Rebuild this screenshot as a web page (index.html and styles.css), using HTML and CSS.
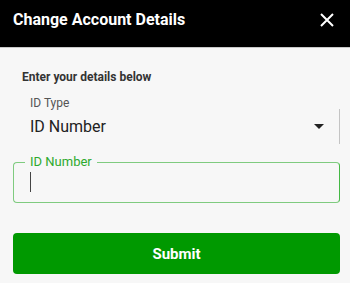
FILE: index.html
```html
<!DOCTYPE html>
<html lang="en">
<head>
<meta charset="utf-8">
<title>Change Account Details</title>
<link rel="stylesheet" href="styles.css">
</head>
<body>
<header class="header">
  <h1 class="title">Change Account Details</h1>
  <button class="close" aria-label="Close">
    <svg width="14" height="14" viewBox="0 0 14 14"><path d="M1 1L13 13M13 1L1 13" stroke="#fff" stroke-width="2" fill="none"/></svg>
  </button>
</header>
<main class="content">
  <p class="intro">Enter your details below</p>
  <div class="select">
    <div class="select-label">ID Type</div>
    <div class="select-row">
      <span class="select-value">ID Number</span>
      <span class="arrow"></span>
    </div>
  </div>
  <div class="field">
    <span class="field-label">ID Number</span>
    <span class="caret"></span>
  </div>
  <button class="submit">Submit</button>
</main>
</body>
</html>
```
FILE: styles.css
```css
html, body {
  margin: 0;
  padding: 0;
}
body {
  background: #f7f7f7;
  font-family: Roboto, "Liberation Sans", sans-serif;
  color: #333;
  height: 283px;
  overflow: hidden;
}
.header {
  height: 48px;
  box-sizing: border-box;
  background: #000;
  border-bottom: 1px solid #c8c8c8;
  display: flex;
  align-items: center;
  justify-content: space-between;
  padding: 0 16px 7px 13px;
}
.title {
  margin: 0;
  color: #fff;
  font-size: 16px;
  font-weight: 700;
  line-height: 20px;
}
.close {
  background: none;
  border: 0;
  padding: 0;
  width: 14px;
  height: 14px;
  display: block;
}
.close svg { display: block; }
.content {
  padding: 21px 10px 0 13px;
}
.intro {
  margin: 0 0 0 9px;
  font-size: 12px;
  font-weight: 700;
  line-height: 16px;
  color: #333;
}
.select {
  margin-top: 13px;
}
.select-label {
  padding-left: 17px;
  font-size: 12px;
  line-height: 11px;
  color: #555;
}
.select-row {
  height: 35px;
  display: flex;
  align-items: center;
  justify-content: space-between;
  padding-left: 17px;
  border-right: 1px solid #c4c4c4;
}
.select-value {
  font-size: 16px;
  line-height: 33px;
  color: #222;
}
.arrow {
  width: 0;
  height: 0;
  border-left: 5px solid transparent;
  border-right: 5px solid transparent;
  border-top: 5px solid #222;
  margin-right: 15px;
}
.field {
  position: relative;
  margin-top: 18px;
  height: 41px;
  box-sizing: border-box;
  border: 1px solid #7fcb7f;
  border-right-color: #45b845;
  border-radius: 4px;
  padding: 9px 0 0 16px;
}
.field-label {
  position: absolute;
  top: -9px;
  left: 11px;
  padding: 0 5px;
  background: #f7f7f7;
  font-size: 13px;
  line-height: 16px;
  color: #2eaa2e;
}
.caret {
  display: block;
  width: 1px;
  height: 20px;
  background: #444;
}
.submit {
  display: block;
  width: 100%;
  margin-top: 30px;
  height: 41px;
  border: 0;
  border-radius: 4px;
  background: #009900;
  color: #fff;
  font-family: Roboto, "Liberation Sans", sans-serif;
  font-size: 15px;
  font-weight: 700;
}
```
